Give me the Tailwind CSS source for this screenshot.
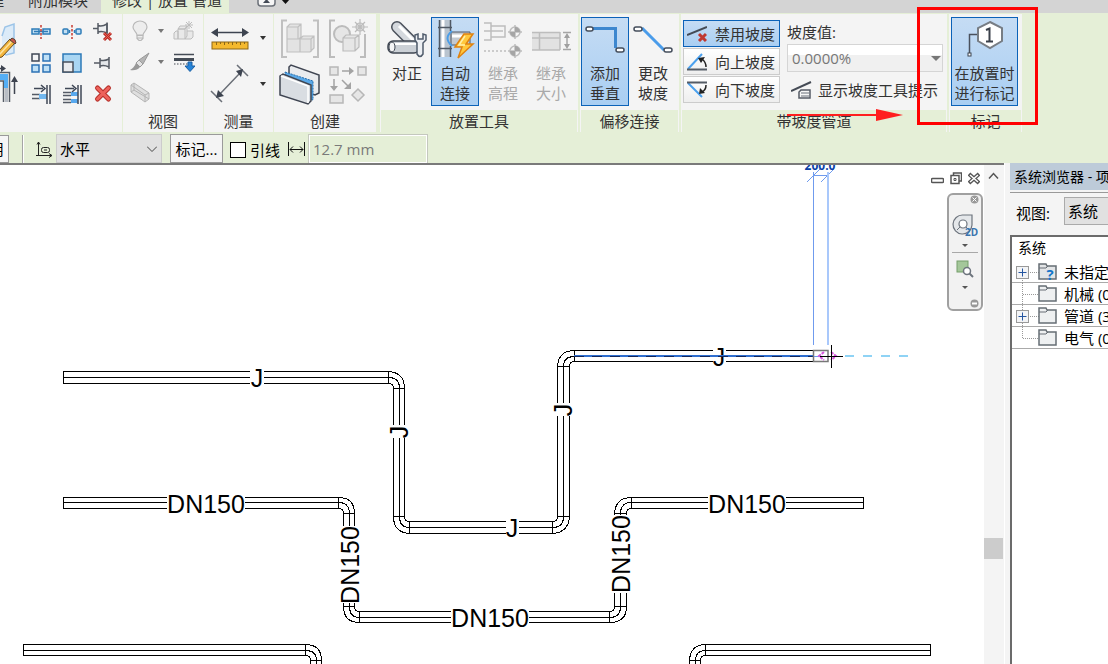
<!DOCTYPE html>
<html lang="zh-CN">
  <head>
    <meta charset="UTF-8" />
    <meta name="viewport" content="width=device-width, initial-scale=1.0" />
    <title>修改 | 放置 管道</title>
    <script src="https://cdn.jsdelivr.net/npm/@tailwindcss/browser@4"></script>
  </head>
  <body
    class="relative flex h-screen flex-col overflow-hidden bg-white font-['Open_Sans','Noto_Sans_CJK_SC',sans-serif] text-[15px] leading-5 text-[#333333]"
  >
    <!-- Tabs -->
    <nav class="flex h-[13px] shrink-0 items-end overflow-hidden bg-[#d4d4d4] whitespace-nowrap">
      <a href="#" class="-ml-[26px] w-[54px] pb-[3px]">管理</a>
      <a href="#" class="w-[73px] pb-[3px]">附加模块</a>
      <a href="#" class="w-32 bg-[#e5efd7] pb-[3px] pl-[11px]">修改 | 放置 管道</a>
      <button class="ml-7 h-[13px]" aria-label="最小化功能区">
        <svg width="34" height="13" class="block">
          <rect x="1" y="-8" width="17" height="14" rx="3" fill="#f6f6f6" stroke="#6b7078" stroke-width="1.5" />
          <path d="M6 3L9.500-1L13 3Z" fill="#444b57" />
          <path d="M24-1h9l-4.500 5Z" fill="#111" />
        </svg>
      </button>
    </nav>

    <!-- Ribbon -->
    <header class="flex h-[119px] shrink-0 overflow-hidden bg-[#e5efd7] pt-px">
      <!-- Modify -->
      <section class="flex w-[123px] shrink-0 border-r border-[#e5efd7] bg-[#f4f4f4] pt-0.5">
        <div class="flex w-[25px] flex-col">
          <button aria-label="编辑">
            <svg width="25" height="45" class="block">
              <path d="M2 20L5 11L14 8V37L6 39L2 36" fill="#dcebf8" stroke="#9cc4e8" stroke-width="1.500" />
              <path d="M-3 37L10 23L15 27L2 41L-3 42Z" fill="#f3b53c" stroke="#6a4a1c" />
              <path d="M-1 39L12 25" stroke="#fde3a0" stroke-width="1.500" />
              <path d="M10 24L12 22Q16 23 16 27L15 28Z" fill="#c8564a" stroke="#5b4636" />
            </svg>
          </button>
          <button aria-label="修剪">
            <svg width="25" height="45" class="block">
              <path d="M0 11.500H9.500V41M0 20H3.500V41" fill="none" stroke="#555b66" stroke-width="1.500" />
              <path d="M0 13H8V27H4V19H0Z" fill="#55aef5" />
              <path d="M6.500 27V41" stroke="#b8bdc5" stroke-width="3" />
              <path d="M0 7.500H3M14.500 33V18" stroke="#3e4450" stroke-width="1.500" />
              <path d="M1 4L6 7.500L1 11ZM11 21L14.500 15L18 21Z" fill="#3e4450" />
            </svg>
          </button>
        </div>
        <div class="grid h-[93px] grid-cols-[31px_31px_31px] grid-rows-3 place-items-center">
          <button aria-label="拆分图元">
            <svg width="20" height="20" class="block">
              <path d="M1 7h7v5H1zM12 7h7v5h-7z" fill="#c4dff2" stroke="#2d7cb8" stroke-width="1.500" />
              <path d="M3 9.500h14" stroke="#2d7cb8" stroke-width="1.500" />
              <path d="M10 3v14" stroke="#c8392e" stroke-width="1.500" stroke-dasharray="2.500 1.500" />
            </svg>
          </button>
          <button aria-label="用间隙拆分">
            <svg width="20" height="20" class="block">
              <rect x="1" y="7" width="5" height="5" rx="1" fill="#c4dff2" stroke="#2d7cb8" stroke-width="1.500" />
              <rect x="14" y="7" width="5" height="5" rx="1" fill="#c4dff2" stroke="#2d7cb8" stroke-width="1.500" />
              <path d="M7.500 8v3M12.500 8v3" stroke="#2d7cb8" stroke-width="1.500" />
              <path d="M10 3v14" stroke="#c8392e" stroke-width="1.500" stroke-dasharray="2.500 1.500" />
            </svg>
          </button>
          <button aria-label="解锁">
            <svg width="22" height="22" class="block">
              <path d="M1 7.500H6M6 2V13M6 4.500Q10 6 15 3V12Q10 9.500 6 11" fill="#eceef0" stroke="#555b64" stroke-width="1.500" />
              <path d="M15 1.500V12" stroke="#555b64" stroke-width="1.500" />
              <path d="M12 12L19 19M19 12L12 19" stroke="#b92f28" stroke-width="3" />
              <path d="M12 12L19 19M19 12L12 19" stroke="#e85b50" />
            </svg>
          </button>
          <button aria-label="阵列">
            <svg width="22" height="22" class="block" stroke-width="1.500">
              <path d="M2 2h7v7H2z" fill="#f3f4f6" stroke="#3f4756" />
              <path d="M13 2h7v7h-7zM2 13h7v7H2zM13 13h7v7h-7z" fill="#bfe0f6" stroke="#2c72b5" />
            </svg>
          </button>
          <button aria-label="缩放">
            <svg width="22" height="22" class="block" stroke-width="1.500">
              <path d="M2 2h18v18H2z" fill="#a9d6f3" stroke="#2c79b8" />
              <path d="M2 10h10v10H2z" fill="#e9ebee" stroke="#4a515e" />
            </svg>
          </button>
          <button aria-label="锁定">
            <svg width="20" height="20" class="block" fill="#e4e7ea" stroke="#555b64" stroke-width="1.500">
              <path d="M1 10H7M7 5V15M7 7Q11 8.500 16 6V14Q11 11.500 7 13M16 4V16" />
            </svg>
          </button>
          <button aria-label="修剪单个图元">
            <svg width="22" height="22" class="block">
              <path d="M2 11.500h8M2 15.500h8" stroke="#555b66" stroke-width="1.500" />
              <rect x="9" y="11" width="8" height="5" fill="#72b7ee" />
              <path d="M17 2v19M20 2v19" stroke="#3f4756" stroke-width="1.500" />
              <path d="M4 5.500h9M11 2L15 5.500L11 9" fill="none" stroke="#3f4756" stroke-width="1.500" />
            </svg>
          </button>
          <button aria-label="修剪多个图元">
            <svg width="22" height="22" class="block">
              <path d="M2 9.500h8M2 12.500h8M2 16.500h8M2 19.500h8" stroke="#555b66" stroke-width="1.500" />
              <path d="M10 11h7M10 18h7" stroke="#58a9ee" stroke-width="4" />
              <path d="M17 2v19M20 2v19" stroke="#3f4756" stroke-width="1.500" />
              <path d="M4 5.500h9M11 2L15 5.500L11 9" fill="none" stroke="#3f4756" stroke-width="1.500" />
            </svg>
          </button>
          <button aria-label="删除">
            <svg width="20" height="20" class="block" stroke-linecap="round">
              <path d="M4.500 4L15.500 15M15.500 4L4.500 15" stroke="#b7312b" stroke-width="5" />
              <path d="M4.500 4L15.500 15M15.500 4L4.500 15" stroke="#ee625b" stroke-width="3" />
            </svg>
          </button>
        </div>
      </section>

      <!-- View -->
      <section class="flex w-[81px] shrink-0 flex-col border-r border-[#e5efd7] bg-[#f4f4f4]">
        <div class="grid h-24 grid-cols-[24px_18px_28px] grid-rows-[31px_31px_31px] place-items-center pt-px pl-[5px]">
          <button aria-label="隐藏">
            <svg width="20" height="22" class="block" fill="#ededed" stroke="#b9b9b9" stroke-width="1.200">
              <path d="M7 15C7 12 3 11 3 7A7 6 0 0 1 17 7C17 11 13 12 13 15Z" />
              <path d="M7 15.500h6v3l-2 2H9l-2-2ZM7 18h6" />
            </svg>
          </button>
          <svg width="6" height="4"><path d="M0 0h6L3 4Z" fill="#777" /></svg>
          <button aria-label="置换">
            <svg width="22" height="20" class="block" fill="#e9e9e9" stroke="#bdbdbd">
              <path d="M5 8l2-3h7l-2 3zM5 8h7v10H5zM12 8l2-3v10l-2 3M1 12l2-2h2v8H1zM14 10h6v6l-2 2h-6" />
              <path d="M16 0v8M12 4h8M13 1l6 6M19 1l-6 6" />
            </svg>
          </button>
          <button aria-label="替换视图图形">
            <svg width="22" height="20" class="block">
              <path d="M10 8L20 1L14 12Z" fill="#b5b5b5" stroke="#989898" />
              <path d="M10 8L14 12L11 15L7 11Z" fill="#e3e3e3" stroke="#9b9b9b" />
              <path d="M7 11L11 15Q8 19 1 18Q5 16 7 11Z" fill="#999" />
            </svg>
          </button>
          <svg width="6" height="4"><path d="M0 0h6L3 4Z" fill="#777" /></svg>
          <button aria-label="线处理">
            <svg width="22" height="20" class="block">
              <path d="M1 2.500h20" stroke="#444b55" stroke-width="1.500" />
              <path d="M1 7.500h20" stroke="#444b55" stroke-width="3" />
              <path d="M1 12h14" stroke="#444b55" stroke-dasharray="1.500 1.500" />
              <path d="M15 10h4v4h3l-5 5.500L12 14h3Z" fill="#2684d8" stroke="#1b5fa3" />
            </svg>
          </button>
          <button aria-label="选择框">
            <svg width="22" height="22" class="block" fill="#dfdfdf" stroke="#b4b4b4">
              <path d="M2 3L5 1L20 11V17L16 20L2 10ZM2 3L16 13V20M16 13L20 11" />
              <path d="M5 1V8L20 17M2 10L5 8" fill="none" />
            </svg>
          </button>
        </div>
        <h2 class="h-[22px] text-center leading-[22px]">视图</h2>
      </section>

      <!-- Measure -->
      <section class="flex w-[70px] shrink-0 flex-col border-r border-[#e5efd7] bg-[#f4f4f4]">
        <div class="grid h-24 grid-cols-[50px_16px] grid-rows-[46px_46px] place-items-center pt-px pl-px">
          <button aria-label="测量">
            <svg width="38" height="26" class="block">
              <path d="M6 7.500H32" stroke="#3d4450" stroke-width="1.500" />
              <path d="M0 7.500L7 3V12ZM38 7.500L31 3V12Z" fill="#3d4450" />
              <rect x="1" y="17" width="36" height="7" fill="#f5b92e" stroke="#8c6716" />
              <path d="M5.500 17v3M9.500 17v2M13.500 17v3M17.500 17v2M21.500 17v3M25.500 17v2M29.500 17v3M33.500 17v2" stroke="#8c6716" />
            </svg>
          </button>
          <svg width="6" height="4"><path d="M0 0h6L3 4Z" fill="#333" /></svg>
          <button aria-label="对齐尺寸标注">
            <svg width="40" height="40" class="block">
              <path d="M9 31L30 9M27 1L38 12M1 27L12 38" stroke="#6b7078" stroke-width="1.500" />
              <path d="M26 7L33 5L31 13ZM6 34L8 26L14 32Z" fill="#3d4450" />
            </svg>
          </button>
          <svg width="6" height="4"><path d="M0 0h6L3 4Z" fill="#333" /></svg>
        </div>
        <h2 class="h-[22px] text-center leading-[22px]">测量</h2>
      </section>

      <!-- Create -->
      <section class="flex w-[102px] shrink-0 flex-col bg-[#f4f4f4]">
        <div class="grid h-24 grid-cols-[48px_48px] grid-rows-[46px_46px] place-items-center pt-0.5 pl-0.5">
          <button aria-label="创建零件">
            <svg width="40" height="40" class="block" fill="#e3e3e3" stroke="#c0c0c0" stroke-width="1.200">
              <path d="M7 1.500H2V38H7M33 1.500h5V38h-5" fill="none" stroke-width="2" />
              <path d="M7 8l3-3h11v13l-2 2H7zM7 8h11v12M18 8l3-3M7 20h13v13H7zM20 20l3-3h11v12l-4 4H20zM20 20h11v13M31 20l3-3" />
            </svg>
          </button>
          <button aria-label="创建部件">
            <svg width="40" height="40" class="block" fill="#e6e6e6" stroke="#bcbcbc" stroke-width="1.200">
              <path d="M7 1.500H2V38H7M37 15V38h-5" fill="none" stroke-width="2" />
              <circle cx="14" cy="15" r="8" stroke-width="2" />
              <path d="M15 19l3-3h13v12l-4 4H15zM15 19h12v13M27 19l4-3" />
              <circle cx="32" cy="8" r="4" />
              <path d="M32 0v16M24 8h16M27 3l10 10M37 3L27 13" />
            </svg>
          </button>
          <button aria-label="创建组">
            <svg width="42" height="42" class="block">
              <path d="M10 3L12 1L40 11V29L36 31L10 22Z" fill="#e9ebee" stroke="#3f4552" stroke-width="1.500" />
              <path d="M6 8L34 17V36L6 27Z" fill="#59a8e8" stroke="#256eae" stroke-dasharray="2 1" />
              <path d="M1 12L4 10L32 21V37L29 40L1 31Z" fill="#d9dde2" stroke="#3f4552" stroke-width="1.500" />
              <path d="M2 12L29 22V39" fill="none" stroke="#fff" stroke-width="1.500" />
            </svg>
          </button>
          <button aria-label="创建类似">
            <svg width="40" height="40" class="block" fill="#e6e6e6" stroke="#b7b7b7" stroke-width="1.500">
              <path d="M2 2h8v8H2zM30 2h8v8h-8zM2 30h13v8H2zM30 24l6 6-6 6-6-6z" />
              <path d="M14 6h10M6 14v8M14 15l6 6" fill="none" stroke="#a3a3a3" />
              <path d="M21 2l5 4-5 4zM2 21l4 5 4-5zM23 17v7h-7z" fill="#a3a3a3" stroke="none" />
            </svg>
          </button>
        </div>
        <h2 class="h-[22px] text-center leading-[22px]">创建</h2>
      </section>

      <!-- Placement tools -->
      <section class="ml-1 flex w-[198px] shrink-0 flex-col border-x border-[#f4f4f4]">
        <div class="flex h-24 items-start bg-[#f4f4f4] pt-[3px] pl-0.5">
          <button class="flex h-[89px] w-12 flex-col items-center border border-transparent pt-px">
            <svg width="40" height="40" class="mb-1 block shrink-0">
              <path d="M10 8L26 24" stroke="#4b515b" stroke-width="12" stroke-linecap="round" />
              <path d="M10 8L26 24" stroke="#d5d9de" stroke-width="9" stroke-linecap="round" />
              <path d="M12 7L27 22" stroke="#fff" stroke-width="3" />
              <rect x="1" y="22" width="31" height="12" rx="5" fill="#cbd0d6" stroke="#3f4652" stroke-width="1.500" />
              <path d="M4 25H29" stroke="#fff" stroke-width="2" />
              <ellipse cx="5" cy="28" rx="3" ry="5" fill="#f4f5f6" stroke="#3f4652" />
              <path d="M28 16V21L30 24V35Q33 40 36 35V24L39 21V16L36 15V20H31V15Z" fill="#eceff3" stroke="#505c6c" stroke-width="1.500" />
            </svg>
            对正
          </button>
          <button class="flex h-[89px] w-12 flex-col items-center border border-[#0b62b8] bg-linear-to-b from-[#c5dcf4] to-[#a9cef2] pt-px">
            <svg width="40" height="40" class="mb-1 block shrink-0">
              <path d="M4 1H16V38H4Z" fill="#b9c4cf" />
              <path d="M8 1V38" stroke="#fff" stroke-width="3" />
              <path d="M4.500 1V38M15.500 1V12M15.500 27V38M3 8.500H17M3 29.500H17" stroke="#505965" stroke-width="1.500" />
              <path d="M16 13H35V26H16Z" fill="#c3c9d0" stroke="#505965" />
              <path d="M17 17H34" stroke="#fff" stroke-width="3" />
              <path d="M17 12Q8 19 17 27" fill="none" stroke="#4a9de8" stroke-width="2" />
              <path d="M29 15L20 28H27L23 39L38 25H31L38 15Z" fill="#ffc83d" stroke="#e08310" stroke-width="1.500" />
              <path d="M30 17L24 26H30" fill="none" stroke="#fff0a8" stroke-width="1.500" />
            </svg>
            自动<br />连接
          </button>
          <button class="flex h-[89px] w-12 flex-col items-center border border-transparent pt-px text-[#a9a9a9]" disabled>
            <svg width="40" height="40" class="mb-1 block shrink-0" fill="none" stroke="#bdbdbd" stroke-width="1.500">
              <path d="M1 4H8V21H1M8 7H22V18H8M1 12H20" />
              <path d="M1 32H24" stroke-dasharray="2 2" />
              <circle cx="32" cy="13" r="5" /><circle cx="32" cy="32" r="5" />
              <path d="M25 13h14M32 6v14M25 32h14M32 25v14" />
              <path d="M32 13V8a5 5 0 0 1 5 5zM32 13v5a5 5 0 0 1-5-5zM32 32v-5a5 5 0 0 1 5 5zM32 32v5a5 5 0 0 1-5-5z" fill="#a5a5a5" stroke="none" />
            </svg>
            继承<br />高程
          </button>
          <button class="flex h-[89px] w-12 flex-col items-center border border-transparent pt-px text-[#a9a9a9]" disabled>
            <svg width="40" height="40" class="mb-1 block shrink-0">
              <path d="M1 13H29V31H1Z" fill="#e2e2e2" />
              <path d="M1 13.500H29M1 31H29M8.500 13V31M29 13V31M1 19H29" fill="none" stroke="#bdbdbd" stroke-width="1.500" />
              <path d="M32 13.500H40M32 30.500H40M36 16V28" stroke="#a5a5a5" stroke-width="1.500" />
              <path d="M33 19L36 14L39 19ZM33 25L36 30L39 25Z" fill="#a0a0a0" />
            </svg>
            继承<br />大小
          </button>
        </div>
        <h2 class="h-[22px] text-center leading-[22px]">放置工具</h2>
      </section>

      <!-- Offset connections -->
      <section class="ml-0.5 flex w-[99px] shrink-0 flex-col border-x border-[#f4f4f4]">
        <div class="flex h-24 items-start bg-[#f4f4f4] pt-[3px]">
          <button class="flex h-[89px] w-12 flex-col items-center border border-[#0b62b8] bg-linear-to-b from-[#c5dcf4] to-[#a9cef2] pt-px">
            <svg width="40" height="40" class="mb-1 block shrink-0">
              <path d="M8 9.500H30.500V29" fill="none" stroke="#3d87cf" stroke-width="3" />
              <rect x="1" y="8" width="7" height="4" rx="2" fill="#fff" stroke="#444d5b" stroke-width="1.500" />
              <rect x="31" y="29" width="8" height="4" rx="2" fill="#fff" stroke="#444d5b" stroke-width="1.500" />
            </svg>
            添加<br />垂直
          </button>
          <button class="flex h-[89px] w-12 flex-col items-center border border-transparent pt-px">
            <svg width="40" height="40" class="mb-1 block shrink-0">
              <path d="M9 9L31 31" fill="none" stroke="#4a9cea" stroke-width="3" />
              <rect x="1" y="8" width="8" height="4" rx="2" fill="#fff" stroke="#444d5b" stroke-width="1.500" />
              <rect x="31" y="29" width="8" height="4" rx="2" fill="#fff" stroke="#444d5b" stroke-width="1.500" />
            </svg>
            更改<br />坡度
          </button>
        </div>
        <h2 class="h-[22px] text-center leading-[22px]">偏移连接</h2>
      </section>

      <!-- Sloped piping -->
      <section class="ml-0.5 flex w-[266px] shrink-0 flex-col border-x border-[#f4f4f4]">
        <div class="flex h-24 gap-[7px] bg-[#f4f4f4] pt-1.5">
          <div class="flex w-[98px] flex-col gap-px pl-px">
            <button class="flex h-[27px] items-center gap-2 border border-[#0b62b8] bg-linear-to-b from-[#c5dcf4] to-[#a9cef2] pl-[3px] whitespace-nowrap">
              <svg width="20" height="20" class="block shrink-0">
                <path d="M0 11L20 3" stroke="#444b55" stroke-width="2" />
                <path d="M12 10L19 17M19 10L12 17" stroke="#bf3831" stroke-width="3" />
              </svg>
              禁用坡度
            </button>
            <button class="flex h-[27px] items-center gap-2 border border-[#cccccc] bg-linear-to-b from-white to-[#eeeeee] pl-[3px] whitespace-nowrap">
              <svg width="20" height="20" class="block shrink-0">
                <path d="M1 17L15 2" stroke="#4aa0ee" stroke-width="2" />
                <path d="M0 17.500H20" stroke="#555c66" stroke-width="2" />
                <path d="M15 7Q19 10 19 15" fill="none" stroke="#222" stroke-width="1.500" />
                <path d="M11 6L18 5L14 11Z" fill="#222" />
              </svg>
              向上坡度
            </button>
            <button class="flex h-[27px] items-center gap-2 border border-[#cccccc] bg-linear-to-b from-white to-[#eeeeee] pl-[3px] whitespace-nowrap">
              <svg width="20" height="20" class="block shrink-0">
                <path d="M1 3L15 17" stroke="#4aa0ee" stroke-width="2" />
                <path d="M0 2.500H20" stroke="#555c66" stroke-width="2" />
                <path d="M19 5Q19 10 15 12" fill="none" stroke="#222" stroke-width="1.500" />
                <path d="M13 8L12 14L18 13Z" fill="#222" />
              </svg>
              向下坡度
            </button>
          </div>
          <div class="flex w-[156px] flex-col">
            <label for="slope" class="h-6 leading-6">坡度值:</label>
            <div class="relative">
              <select id="slope" class="block h-7 w-full appearance-none border border-[#d5d5d5] bg-linear-to-b from-white from-40% to-[#f0f0f0] to-40% pl-1 text-[#777777]">
                <option>0.0000%</option>
              </select>
              <svg width="10" height="6" class="pointer-events-none absolute top-3 right-0.5"><path d="M0 0h10L5 5Z" fill="#777" /></svg>
            </div>
            <button class="mt-1.5 ml-1 flex h-6 items-center gap-1.5 whitespace-nowrap">
              <svg width="21" height="20" class="block shrink-0">
                <path d="M0 11L20 2" stroke="#454b55" stroke-width="2" />
                <path d="M10 10H19V18H8V12Z" fill="#f7f7f7" stroke="#555b65" stroke-width="1.500" />
                <path d="M10 13h8M10 16h8" stroke="#6b717b" />
              </svg>
              显示坡度工具提示
            </button>
          </div>
        </div>
        <h2 class="h-[22px] text-center leading-[22px]">带坡度管道</h2>
      </section>

      <!-- Tag -->
      <section class="ml-0.5 flex w-[73px] shrink-0 flex-col border-x border-[#f4f4f4]">
        <div class="flex h-24 items-start bg-[#f4f4f4] pt-[3px] pl-px">
          <button class="flex h-[89px] w-[67px] flex-col items-center border border-[#0b62b8] bg-linear-to-b from-[#c5dcf4] to-[#a9cef2] pt-px whitespace-nowrap">
            <svg width="40" height="40" class="mb-1 block shrink-0">
              <path d="M4.500 34V15.500H13" fill="none" stroke="#4a515d" stroke-width="1.500" />
              <rect x="3" y="34" width="3" height="3" fill="#fff" stroke="#3d4450" />
              <path d="M25 3L37 9V22L25 29L13 22V9Z" fill="#fff" stroke="#777d84" stroke-width="2" />
              <path d="M21 11L24.500 9.500V22M21 22.500H28" fill="none" stroke="#3a404a" stroke-width="2" />
            </svg>
            在放置时<br />进行标记
          </button>
        </div>
        <h2 class="h-[22px] text-center leading-[22px]">标记</h2>
      </section>
    </header>

    <!-- Options bar -->
    <div class="flex h-[31px] shrink-0 items-end bg-[#e5efd7] text-black">
      <button class="flex h-7 w-[9px] items-center justify-end overflow-hidden border border-l-0 border-[#9a9a9a] bg-[#f6f6f6] pr-1 whitespace-nowrap">应用</button>
      <div class="ml-[13px] h-7 w-0.5 border-l border-[#a5a5a5] bg-white"></div>
      <svg width="17" height="28" class="ml-3 block shrink-0" fill="none" stroke="#222">
        <path d="M2.500 7V20.500H16M1 9.500L2.500 7L4 9.500M13 18.500L16 20.500L13 22.500M0 20.500H3" />
        <rect x="5.500" y="12.500" width="8" height="5" rx="2" /><path d="M8 15h3" />
      </svg>
      <div class="relative ml-[3px]">
        <select aria-label="标记方向" class="block h-[29px] w-[106px] appearance-none border border-[#cccccc] bg-[#e1e1e1] pl-[3px]">
          <option>水平</option>
        </select>
        <svg width="10" height="6" class="pointer-events-none absolute top-3 right-[5px]" fill="none" stroke="#444"><path d="M0 0.500L5 5.500L10 0.500" /></svg>
      </div>
      <button class="ml-2 h-[29px] w-[53px] border border-[#9a9a9a] bg-[#f4f4f4] whitespace-nowrap">标记...</button>
      <div class="ml-[7px] flex h-[27px] items-center gap-1">
        <input id="leader" type="checkbox" class="size-4 appearance-none border border-black bg-white" />
        <label for="leader">引线</label>
      </div>
      <svg width="17" height="28" class="ml-2 block shrink-0" fill="none" stroke="#111">
        <path d="M0.500 7V21M16.500 7V21M2 14.500H15M5 11.500L2 14.500L5 17.500M12 11.500L15 14.500L12 17.500" />
      </svg>
      <input type="text" aria-label="引线长度" value="12.7 mm" class="ml-[3px] h-[29px] w-[120px] border border-b-0 border-[#c4c8be] bg-[#e5efd7] pl-1 text-[#7a7a7a] inset-ring inset-ring-white" />
    </div>

    <main class="flex min-h-0 flex-1">
      <div class="flex min-w-0 flex-1 border-t-2 border-[#7a7a7a]">
        <!-- Drawing view -->
        <div class="relative min-w-0 flex-1 overflow-hidden bg-white">
          <svg class="absolute inset-0 size-full font-['Liberation_Sans',Arial,sans-serif]">
            <g transform="translate(0 -165)">
              <g fill="none" stroke="#000" shape-rendering="crispEdges">
                <!-- J run -->
                <path d="M388.500 371.500H63.500V383.500H388.500M63.500 377.500H388.500M388.500 371V384" />
                <path d="M388.500 371.500Q404.500 372.500 404.500 388.500M388.500 377.500Q399.500 377.500 399.500 388.500M388.500 383.500Q393.500 383.500 393.500 388.500M393 388.500H405" />
                <path d="M393.500 388V516M399.500 388V516M404.500 388V516M393 516.500H405" />
                <path d="M393.500 516.500Q393.500 532.500 409.500 533.500M399.500 516.500Q399.500 527.500 409.500 527.500M404.500 516.500Q404.500 521.500 409.500 521.500M409.500 521V534" />
                <path d="M409 521.500H552M409 527.500H552M409 533.500H552M552.500 521V534" />
                <path d="M552.500 533.500Q568.500 532.500 569.500 516.500M552.500 527.500Q563.500 527.500 563.500 516.500M552.500 521.500Q557.500 521.500 557.500 516.500M557 516.500H570" />
                <path d="M557.500 516V366M563.500 516V366M569.500 516V366M557 366.500H570" />
                <path d="M557.500 366.500Q558.500 350.500 574.500 350.500M563.500 366.500Q563.500 356.500 574.500 356.500M569.500 366.500Q569.500 361.500 574.500 361.500M574.500 350V362" />
                <path d="M574 350.500H813M574 361.500H813" />
                <!-- DN150 run -->
                <path d="M338.500 497.500H63.500V508.500H338.500M63.500 502.500H338.500M338.500 497V509" />
                <path d="M338.500 497.500Q354.500 497.500 354.500 513.500M338.500 502.500Q349.500 502.500 349.500 513.500M338.500 508.500Q343.500 508.500 343.500 513.500M343 513.500H355" />
                <path d="M343.500 513V606M349.500 513V606M354.500 513V606M343 606.500H355" />
                <path d="M343.500 606.500Q343.500 622.500 359.500 622.500M349.500 606.500Q349.500 617.500 359.500 617.500M354.500 606.500Q354.500 611.500 359.500 611.500M359.500 611V623" />
                <path d="M359 611.500H609M359 617.500H609M359 622.500H609M609.500 611V623" />
                <path d="M609.500 622.500Q626.500 622.500 626.500 606.500M609.500 617.500Q620.500 617.500 620.500 606.500M609.500 611.500Q614.500 611.500 614.500 606.500M614 606.500H627" />
                <path d="M614.500 606V513M620.500 606V513M626.500 606V513M614 513.500H627" />
                <path d="M614.500 513.500Q615.500 497.500 631.500 497.500M620.500 513.500Q620.500 502.500 631.500 502.500M626.500 513.500Q626.500 508.500 631.500 508.500M631.500 497V509" />
                <path d="M631 497.500H863.500V508.500H631M631 502.500H863" />
                <!-- lower runs -->
                <path d="M305.500 644.500H23.500V655.500H305.500M23.500 650.500H305.500M305.500 644V656" />
                <path d="M305.500 644.500Q321.500 644.500 321.500 660.500M305.500 650.500Q316.500 650.500 316.500 660.500M305.500 655.500Q310.500 655.500 310.500 660.500M310 660.500H322M310.500 660V700M316.500 660V700M321.500 660V700" />
                <path d="M689.500 660.500Q690.500 644.500 705.500 644.500M695.500 660.500Q695.500 650.500 705.500 650.500M700.500 660.500Q700.500 655.500 705.500 655.500M689 660.500H701M689.500 660V700M695.500 660V700M700.500 660V700M705.500 644V656" />
                <path d="M705 644.500H930.500V655.500H705M705 650.500H930" />
              </g>
              <!-- gaps under the pipe labels -->
              <g fill="#fff">
                <rect x="250" y="368" width="14" height="19" />
                <rect x="391" y="425" width="18" height="13" />
                <rect x="506" y="518" width="13" height="19" />
                <rect x="555" y="403" width="17" height="13" />
                <rect x="713" y="347" width="13" height="19" />
                <rect x="167" y="494" width="78" height="18" />
                <rect x="708" y="494" width="78" height="18" />
                <rect x="451" y="608" width="78" height="18" />
                <rect x="340" y="526" width="18" height="77" />
                <rect x="611" y="515" width="18" height="78" />
              </g>
              <g font-size="25" text-anchor="middle" fill="#000">
                <text x="257" y="387">J</text>
                <text x="512" y="537">J</text>
                <text x="719" y="366">J</text>
                <text transform="translate(408 432) rotate(-90)">J</text>
                <text transform="translate(572 410) rotate(-90)">J</text>
                <text x="206" y="513">DN150</text>
                <text x="747" y="513">DN150</text>
                <text x="490" y="627">DN150</text>
                <text transform="translate(359 565) rotate(-90)">DN150</text>
                <text transform="translate(630 554) rotate(-90)">DN150</text>
              </g>
              <!-- segment being placed -->
              <path d="M574 356H814" stroke="#2f6fd0" stroke-width="2" />
              <path d="M574 356.500H814" stroke="#12275c" stroke-dasharray="10 8" />
              <path d="M813.500 350.500H828V361.500H813.500Z" fill="none" stroke="#777" stroke-width="1.500" />
              <path d="M814 356.500H820" stroke="#6f9bee" />
              <path d="M845 356H912" stroke="#8fd3f5" stroke-width="2" stroke-dasharray="9 9" />
              <path d="M824 352L819 356L824 360M831 352L836 356L831 360" fill="none" stroke="#d557dc" stroke-width="2" stroke-dasharray="3 1" />
              <path d="M820 356.500H843M831.500 345V368" stroke="#000" />
              <!-- temporary dimension -->
              <path d="M813.500 172V345M813 175.500H828M807 182L820 169M821 182L834 169" fill="none" stroke="#6f9bee" />
              <path d="M828 172V345" stroke="#a9c8fb" stroke-width="2" />
              <text x="820" y="170" font-size="12" font-weight="bold" text-anchor="middle" fill="#0b3fa8" class="font-['Open_Sans',sans-serif]">200.0</text>
            </g>
          </svg>

          <!-- View window buttons -->
          <div class="absolute top-1.5 right-1 flex items-center gap-1.5">
            <button aria-label="最小化"><svg width="13" height="14" class="block"><rect x="0.500" y="7.500" width="12" height="4" rx="1" fill="#fff" stroke="#555" stroke-width="1.500" /></svg></button>
            <button aria-label="还原"><svg width="12" height="14" class="block" fill="#fff" stroke="#555" stroke-width="1.500"><path d="M3.500 2h8v8h-8z" /><path d="M1 4.500h8v8H1z" /><path d="M4 7.500h2v2H4z" stroke-width="1" /></svg></button>
            <button aria-label="关闭"><svg width="12" height="14" class="block"><path d="M1 3L11 12M11 3L1 12" stroke="#555" stroke-width="4" /><path d="M2 4L10 11M10 4L2 11" stroke="#fff" stroke-width="1.500" /></svg></button>
          </div>

          <!-- Navigation bar -->
          <div class="absolute top-7 right-px flex h-[118px] w-9 flex-col items-center rounded-md border-2 border-[#a0a0a0] bg-[#f2f2f2]">
            <button class="self-end pr-0.5" aria-label="关闭导航栏">
              <svg width="9" height="9" class="block"><circle cx="4.500" cy="4.500" r="4" fill="#999" /><path d="M2.500 2.500L6.500 6.500M6.500 2.500L2.500 6.500" stroke="#fff" /></svg>
            </button>
            <button class="mt-2" aria-label="二维控制盘">
              <svg width="26" height="26" class="block">
                <path d="M11 3H20V13A9.500 9.500 0 1 1 11 3Z" fill="#e4e7ea" stroke="#6d747d" stroke-width="1.200" />
                <circle cx="11" cy="12" r="4" fill="#fff" stroke="#6d747d" stroke-width="1.200" />
                <path d="M8 15L5 18M14 15L17 18" stroke="#6d747d" />
                <text x="13" y="24" font-size="10" font-weight="bold" fill="#3a74ad">2D</text>
              </svg>
            </button>
            <svg width="6" height="4" class="mt-1.5 block shrink-0"><path d="M0 0h6L3 3Z" fill="#555" /></svg>
            <div class="mt-1 h-px w-[26px] shrink-0 bg-[#a8a8a8]"></div>
            <button class="mt-[7px]" aria-label="区域放大">
              <svg width="18" height="18" class="block">
                <rect x="1" y="1" width="11" height="11" fill="#a4c79a" stroke="#759e6a" />
                <circle cx="11" cy="11" r="3.500" fill="#fff" stroke="#6d747d" stroke-width="1.500" />
                <path d="M13.500 13.500L17 17" stroke="#6d747d" stroke-width="2" />
              </svg>
            </button>
            <svg width="6" height="4" class="mt-2 block shrink-0"><path d="M0 0h6L3 3Z" fill="#555" /></svg>
            <button class="mt-auto self-end pr-0.5 pb-px" aria-label="导航栏选项">
              <svg width="9" height="9" class="block"><circle cx="4.500" cy="4.500" r="4" fill="#999" /><path d="M2 4.500H7" stroke="#fff" stroke-width="2" /></svg>
            </button>
          </div>
        </div>

        <!-- Vertical scrollbar -->
        <div class="flex w-5 shrink-0 flex-col bg-[#f4f4f4]">
          <svg width="20" height="22" class="block" fill="none" stroke="#555" stroke-width="1.500"><path d="M5 13.500L9.500 8.500L14 13.500" /></svg>
          <div class="mt-[351px] h-[21px] w-[19px] bg-[#cccccc]"></div>
        </div>
      </div>

      <!-- System browser -->
      <aside class="ml-px flex w-[103px] shrink-0 flex-col overflow-hidden bg-[#f4f4f4] pl-[5px] whitespace-nowrap text-black">
        <h2 class="h-[27px] shrink-0 bg-[#bdcbd9] pl-1 text-sm leading-[27px]">系统浏览器 - 项</h2>
        <div class="mt-0.5 flex h-[43px] shrink-0 border-t border-[#999999] pt-1 pl-1.5">
          <label for="view" class="w-12 shrink-0 leading-8">视图:</label>
          <select id="view" class="h-7 w-32 shrink-0 appearance-none border border-[#aaaaaa] bg-[#e1e1e1] pl-[3px]">
            <option>系统</option>
          </select>
        </div>
        <div class="flex-1 border-t-2 border-l-2 border-[#6b6b6b] bg-white">
          <div class="h-6 pl-1.5 text-sm leading-[22px]">系统</div>
          <ul>
            <li class="flex h-[22px] items-center gap-1.5 border-b border-[#aaaaaa]">
              <svg width="46" height="22" class="block shrink-0">
                <path d="M10.500 17V22M18 11.500H27" stroke="#999" stroke-dasharray="1 1" />
                <rect x="4.500" y="5.500" width="12" height="12" fill="#f3f4f6" stroke="#999" />
                <path d="M6.500 11.500h8M10.500 7.500v8" stroke="#2455a0" />
                <path d="M27 3H34L35 5H44V18H27Z" fill="#e3e5e7" stroke="#666d74" stroke-width="1.500" />
                <path d="M27 7H34L36 5" fill="none" stroke="#666d74" />
                <text x="38" y="19" font-size="15" font-weight="bold" text-anchor="middle" fill="#1675c8">?</text>
              </svg>
              未指定
            </li>
            <li class="flex h-[22px] items-center gap-1.5 border-b border-[#aaaaaa]">
              <svg width="46" height="22" class="block shrink-0">
                <path d="M10.500 0V22M11 11.500H27" stroke="#999" stroke-dasharray="1 1" />
                <path d="M27 3H34L35 5H44V18H27Z" fill="#eef0f1" stroke="#666d74" stroke-width="1.500" />
                <path d="M27 7H34L36 5" fill="none" stroke="#666d74" />
              </svg>
              机械 (0
            </li>
            <li class="flex h-[22px] items-center gap-1.5 border-b border-[#aaaaaa]">
              <svg width="46" height="22" class="block shrink-0">
                <path d="M10.500 0V22M18 11.500H27" stroke="#999" stroke-dasharray="1 1" />
                <rect x="4.500" y="5.500" width="12" height="12" fill="#f3f4f6" stroke="#999" />
                <path d="M6.500 11.500h8M10.500 7.500v8" stroke="#2455a0" />
                <path d="M27 3H34L35 5H44V18H27Z" fill="#eef0f1" stroke="#666d74" stroke-width="1.500" />
                <path d="M27 7H34L36 5" fill="none" stroke="#666d74" />
              </svg>
              管道 (3
            </li>
            <li class="flex h-[22px] items-center gap-1.5 border-b border-[#aaaaaa]">
              <svg width="46" height="22" class="block shrink-0">
                <path d="M10.500 0V11.500H27" fill="none" stroke="#999" stroke-dasharray="1 1" />
                <path d="M27 3H34L35 5H44V18H27Z" fill="#eef0f1" stroke="#666d74" stroke-width="1.500" />
                <path d="M27 7H34L36 5" fill="none" stroke="#666d74" />
              </svg>
              电气 (0
            </li>
          </ul>
        </div>
      </aside>
    </main>

    <!-- Red callout over the tag button -->
    <div class="pointer-events-none absolute top-[7px] left-[917px] h-[118px] w-[121px] border-3 border-[#ff0000]"></div>
    <svg width="118" height="14" class="pointer-events-none absolute top-[108px] left-[786px]">
      <path d="M1 7H92" stroke="#ff1f1f" stroke-width="2" />
      <path d="M90 1L117 7L90 13Z" fill="#ff1f1f" />
    </svg>
  </body>
</html>
